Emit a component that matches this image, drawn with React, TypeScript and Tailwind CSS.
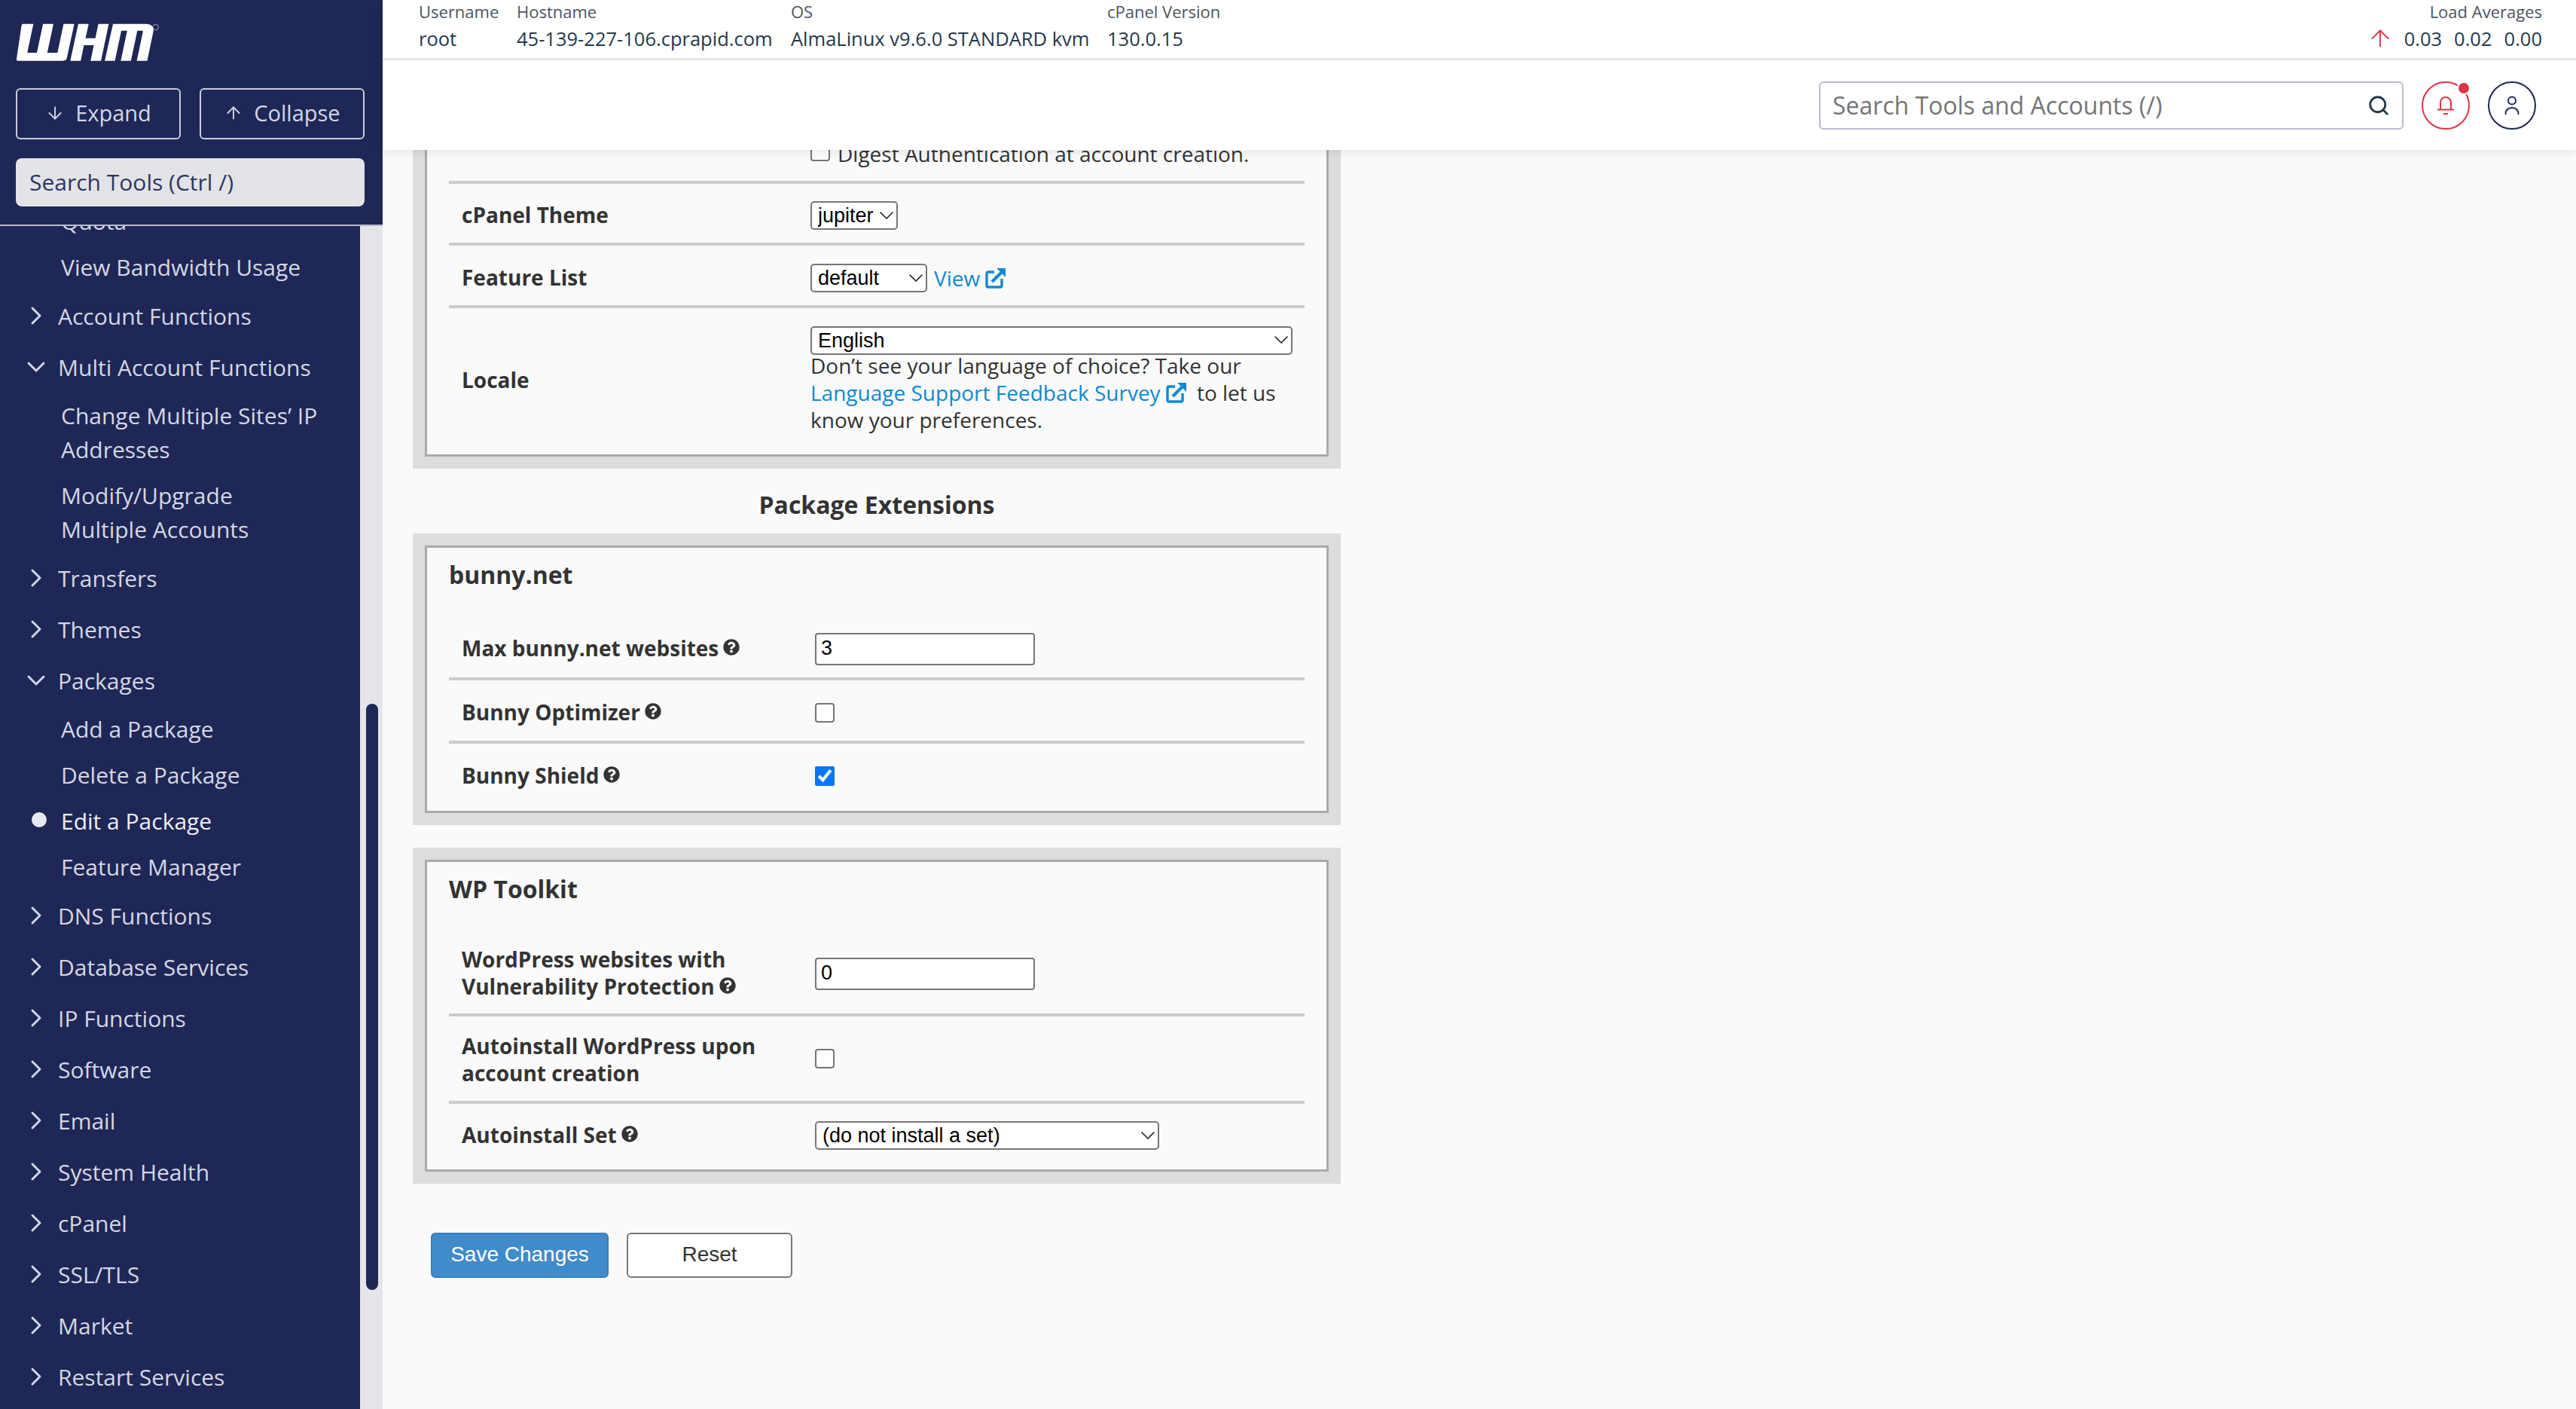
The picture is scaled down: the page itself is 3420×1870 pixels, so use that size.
import { ArrowDown, ArrowUp, ChevronDown, ChevronRight, Search } from "lucide-react";
import type { ReactNode } from "react";
import { FaQuestionCircle } from "react-icons/fa";

type NavItem = { label: string; open?: boolean; children?: { label: ReactNode; active?: boolean }[] };

const navItems: NavItem[] = [
  { label: "Account Functions" },
  {
    label: "Multi Account Functions",
    open: true,
    children: [
      { label: <>Change Multiple Sites’ IP<br />Addresses</> },
      { label: <>Modify/Upgrade<br />Multiple Accounts</> },
    ],
  },
  { label: "Transfers" },
  { label: "Themes" },
  {
    label: "Packages",
    open: true,
    children: [
      { label: "Add a Package" },
      { label: "Delete a Package" },
      { label: "Edit a Package", active: true },
      { label: "Feature Manager" },
    ],
  },
  { label: "DNS Functions" },
  { label: "Database Services" },
  { label: "IP Functions" },
  { label: "Software" },
  { label: "Email" },
  { label: "System Health" },
  { label: "cPanel" },
  { label: "SSL/TLS" },
  { label: "Market" },
  { label: "Restart Services" },
];

function WhmLogo() {
  return (
    <svg viewBox="0 0 630 210" className="ml-[-11px] h-[70px] w-[210px]" fill="#fff">
      <g transform="translate(-19.3 0) scale(1.064 1)">
        <path d="M75 35H115L92 150H128L151 35H190L167 150H205L228 35H268L240 172Q238 182 225 182H58Q50 182 52 174L70 45Q72 35 75 35Z" />
        <path d="M283 35H322L310 92H347L358 35H397L368 182H329L341 120H304L292 182H253Z" />
        <path d="M413 35H535Q570 35 563 70L541 182H502L525 66Q526 62 520 62H504L480 182H442L466 62H444L420 182H382Z" />
      </g>
      <circle cx="590" cy="48" r="11" fill="none" stroke="#c7cad8" strokeWidth="2.5" />
    </svg>
  );
}

function ExternalIcon() {
  return (
    <svg viewBox="0 0 27 27" className="inline-block h-[27px] w-[27px] align-[-3px]" fill="none" stroke="#0e8ad0" strokeWidth="3.4">
      <path d="M12 5H4q-2 0-2 2v16q0 2 2 2h16q2 0 2-2v-9" />
      <path d="M9 18 22 5" strokeWidth="4" />
      <path d="M15 0h12v12z" strokeWidth="0" fill="#0e8ad0" />
    </svg>
  );
}

function Help() {
  return <FaQuestionCircle className="ml-[6px] inline-block h-[22px] w-[22px] align-[1px] text-[#333]" />;
}

function FakeSelect({ width, value }: { width: string; value: string }) {
  return (
    <div className={`relative h-[38px] shrink-0 ${width}`}>
      <select className="h-full w-full appearance-none rounded-[5px] border-2 border-[#767676] bg-white pl-[8px] font-['Liberation_Sans'] text-[27px] leading-[34px] text-black">
        <option>{value}</option>
      </select>
      <ChevronDown className="pointer-events-none absolute right-[-1px] top-[3px] h-[32px] w-[32px] text-[#222]" strokeWidth={1.25} />
    </div>
  );
}

function TextBox({ value }: { value: string }) {
  return (
    <input
      readOnly
      value={value}
      className="h-[43px] w-[292px] rounded-[4px] border-2 border-[#767676] bg-white pb-[2px] pl-[6px] font-['Liberation_Sans'] text-[27px] text-black"
    />
  );
}

function CheckBox({ checked }: { checked?: boolean }) {
  if (checked) {
    return <input type="checkbox" readOnly checked className="m-0 h-[26px] w-[26px] accent-[#0a76f6]" />;
  }
  return <input type="checkbox" readOnly className="m-0 h-[26px] w-[26px] appearance-none rounded-[4px] border-2 border-[#767676] bg-white" />;
}

function Row({ label, height, value, last, narrow }: { label: ReactNode; height: string; value: ReactNode; last?: boolean; narrow?: boolean }) {
  return (
    <div className={`flex items-center ${height} ${last ? "" : "border-b-4 border-[#cccccc]"}`}>
      <div className={`${narrow ? "w-[480px]" : "w-[486px]"} shrink-0 pb-[2px] pl-[17px] text-[28px] font-bold leading-[36px] text-[#333]`}>{label}</div>
      {value}
    </div>
  );
}

function Panel({ title, children }: { title?: string; children: ReactNode }) {
  return (
    <div className="w-[1232px] bg-[#dddddd] p-[16px]">
      <div className="border-[3px] border-[#aaaaaa] bg-[#fafafa] px-[29px]">
        {title && <div className="h-[96px] pt-[16px] text-[32px] font-bold leading-[40px] text-[#333]">{title}</div>}
        {children}
      </div>
    </div>
  );
}

function Sidebar() {
  return (
    <aside className="flex h-full w-[508px] shrink-0 flex-col">
      <div className="h-[300px] shrink-0 border-b-2 border-[#b8bbcc] bg-[#1f2756] pl-[21px] pr-[24px] pt-[20px]">
        <WhmLogo />
        <div className="mt-[27px] flex gap-[25px]">
          <button className="flex h-[68px] w-[219px] items-center justify-center gap-[14px] rounded-[6px] border-2 border-[#c9ccda] pb-[2px] text-[29px] text-[#d5d7e3]">
            <ArrowDown className="h-[26px] w-[26px]" strokeWidth={1.75} />
            Expand
          </button>
          <button className="flex h-[68px] w-[219px] items-center justify-center gap-[14px] rounded-[6px] border-2 border-[#c9ccda] pb-[2px] text-[29px] text-[#d5d7e3]">
            <ArrowUp className="h-[26px] w-[26px]" strokeWidth={1.75} />
            Collapse
          </button>
        </div>
        <div className="mt-[25px] flex h-[64px] w-[463px] items-center rounded-[8px] bg-[#e3e4e8] pb-[2px] pl-[18px] text-[30px] text-[#2e3664]">
          Search Tools (Ctrl /)
        </div>
      </div>
      <div className="flex min-h-0 flex-1">
        <nav className="w-[478px] shrink-0 overflow-hidden bg-[#1f2756] text-[30px] text-[#d5d7e3]">
          <div className="mt-[-37px] py-[8px] pl-[81px] leading-[45px]">Quota</div>
          <div className="py-[8px] pl-[81px] leading-[45px]">View Bandwidth Usage</div>
          {navItems.map((item) => (
            <div key={item.label}>
              <div className="flex h-[68px] items-center pl-[28px]">
                <span className="flex w-[49px] justify-start">
                  {item.open ? (
                    <ChevronDown className="h-[40px] w-[40px]" strokeWidth={1.75} />
                  ) : (
                    <ChevronRight className="h-[40px] w-[40px]" strokeWidth={1.75} />
                  )}
                </span>
                {item.label}
              </div>
              {item.children?.map((child, i) => (
                <div key={i} className={`relative py-[8px] pl-[81px] leading-[45px] ${child.active ? "text-[#eceef4]" : ""}`}>
                  {child.active && <span className="absolute left-[42px] top-[19px] h-[20px] w-[20px] rounded-full bg-[#e8e9ee]" />}
                  {child.label}
                </div>
              ))}
            </div>
          ))}
        </nav>
        <div className="w-[30px] shrink-0 bg-[#e4e5e9] pl-[8px] pt-[634px]">
          <div className="h-[778px] w-[16px] rounded-full bg-[#1f2756]" />
        </div>
      </div>
    </aside>
  );
}

function TopBar() {
  return (
    <header className="relative z-10 shrink-0 bg-white shadow-[0_4px_12px_rgba(0,0,0,0.08)]">
      <div className="flex h-[80px] border-b-[3px] border-[#e6e6e6] pl-[48px] pr-[45px] text-[25.5px] leading-[36px] text-[#25384a]">
        <div className="w-[130px]">
          <div className="text-[22px] leading-[30px] text-[#4b5563]">Username</div>
          <div className="mt-[3px]">root</div>
        </div>
        <div className="w-[364px]">
          <div className="text-[22px] leading-[30px] text-[#4b5563]">Hostname</div>
          <div className="mt-[3px]">45-139-227-106.cprapid.com</div>
        </div>
        <div className="w-[420px]">
          <div className="text-[22px] leading-[30px] text-[#4b5563]">OS</div>
          <div className="mt-[3px]">AlmaLinux v9.6.0 STANDARD kvm</div>
        </div>
        <div>
          <div className="text-[22px] leading-[30px] text-[#4b5563]">cPanel Version</div>
          <div className="mt-[3px]">130.0.15</div>
        </div>
        <div className="ml-auto text-right">
          <div className="text-[22px] leading-[30px] text-[#4b5563]">Load Averages</div>
          <div className="mt-[3px] flex items-center justify-end gap-[16px]">
            <ArrowUp className="mr-[-2px] h-[36px] w-[36px] text-[#dc3545]" strokeWidth={1.25} />
            <span>0.03</span>
            <span>0.02</span>
            <span>0.00</span>
          </div>
        </div>
      </div>
      <div className="flex h-[119px] items-center justify-end pr-[53px]">
        <div className="flex h-[64px] w-[776px] items-center justify-between rounded-[6px] border-2 border-[#b9bbcc] pl-[16px] pr-[16px] text-[32px] text-[#757575]">
          Search Tools and Accounts (/)
          <Search className="h-[30px] w-[30px] text-[#25384a]" strokeWidth={2.25} />
        </div>
        <div className="relative ml-[24px] flex h-[64px] w-[64px] items-center justify-center rounded-full border-2 border-[#dc3545]">
          <svg viewBox="0 0 24 26" className="h-[26px] w-[24px]" fill="none" stroke="#dc3545" strokeWidth="2">
            <path d="M5 18V9a7 7 0 0 1 14 0v9" />
            <path d="M1 18.5h22" />
            <path d="M9 24h6" />
          </svg>
          <span className="absolute right-[-1px] top-[0px] h-[14px] w-[14px] rounded-full bg-[#dc3545] ring-2 ring-white" />
        </div>
        <div className="ml-[24px] flex h-[64px] w-[64px] items-center justify-center rounded-full border-2 border-[#1f2756]">
          <svg viewBox="0 0 20 26" className="h-[26px] w-[20px]" fill="none" stroke="#1f2756" strokeWidth="2">
            <circle cx="10" cy="6.5" r="5" />
            <path d="M1.5 25c0-6 3.5-9 8.5-9s8.5 3 8.5 9" />
          </svg>
        </div>
      </div>
    </header>
  );
}

export default function App() {
  return (
    <div className="flex h-screen overflow-hidden bg-[#fafafa] font-['Open_Sans',sans-serif]">
      <Sidebar />
      <main className="flex min-w-0 flex-1 flex-col">
        <TopBar />
        <div className="min-h-0 flex-1 overflow-hidden pl-[40px]">
          <div className="mt-[-40px]">
            <Panel>
              <div className="flex h-[66px] items-start border-b-4 border-[#cccccc] pl-[480px] pt-[10px] text-[28px] leading-[36px] text-[#333]">
                <CheckBox />
                <span className="ml-[10px] mt-[-2px]">Digest Authentication at account creation.</span>
              </div>
              <Row narrow label="cPanel Theme" height="h-[82px] pt-[6px]" value={<FakeSelect width="w-[116px]" value="jupiter" />} />
              <Row
                narrow
                label="Feature List"
                height="h-[83px] pt-[6px]"
                value={
                  <div className="flex items-center">
                    <FakeSelect width="w-[155px]" value="default" />
                    <a className="ml-[9px] text-[28px] text-[#0e8ad0]">
                      View <ExternalIcon />
                    </a>
                  </div>
                }
              />
              <div className="flex h-[194px] items-center">
                <div className="w-[480px] shrink-0 pb-[4px] pl-[17px] text-[28px] font-bold leading-[36px] text-[#333]">Locale</div>
                <div className="w-[640px] self-start pt-[23px] text-[28px] leading-[36px] text-[#333]">
                  <FakeSelect width="w-[640px]" value="English" />
                  <p className="mt-[-3px]">
                    Don’t see your language of choice? Take our
                    <br />
                    <a className="text-[#0e8ad0]">Language Support Feedback Survey</a> <ExternalIcon />
                    <span className="ml-[14px]">to let us</span>
                    <br />
                    know your preferences.
                  </p>
                </div>
              </div>
            </Panel>
          </div>
          <h2 className="flex h-[86px] w-[1232px] items-center justify-center pt-[10px] text-[32px] font-bold text-[#333]">
            Package Extensions
          </h2>
          <Panel title="bunny.net">
            <Row label={<>Max bunny.net websites<Help /></>} height="h-[80px]" value={<TextBox value="3" />} />
            <Row label={<>Bunny Optimizer<Help /></>} height="h-[84px] pt-[6px]" value={<CheckBox />} />
            <Row label={<>Bunny Shield<Help /></>} height="h-[89px] pb-[3px]" last value={<CheckBox checked />} />
          </Panel>
          <div className="mt-[30px]">
            <Panel title="WP Toolkit">
              <Row
                label={<div className="mt-[-2px]">WordPress websites with<br />Vulnerability Protection<Help /></div>}
                height="h-[109px]"
                value={<TextBox value="0" />}
              />
              <Row
                label={<div className="mt-[3px]">Autoinstall WordPress upon<br />account creation</div>}
                height="h-[116px]"
                value={<CheckBox />}
              />
              <Row label={<>Autoinstall Set<Help /></>} height="h-[87px] pb-[3px]" last value={<FakeSelect width="w-[457px]" value="(do not install a set)" />} />
            </Panel>
          </div>
          <div className="ml-[24px] mt-[65px] flex gap-[24px] font-['Liberation_Sans'] text-[28px]">
            <button className="h-[60px] w-[236px] rounded-[6px] border-2 border-[#357ebd] bg-[#428bca] pb-[2px] text-white">Save Changes</button>
            <button className="h-[60px] w-[220px] rounded-[6px] border-2 border-[#767676] bg-white pb-[2px] text-[#333]">Reset</button>
          </div>
        </div>
      </main>
    </div>
  );
}
